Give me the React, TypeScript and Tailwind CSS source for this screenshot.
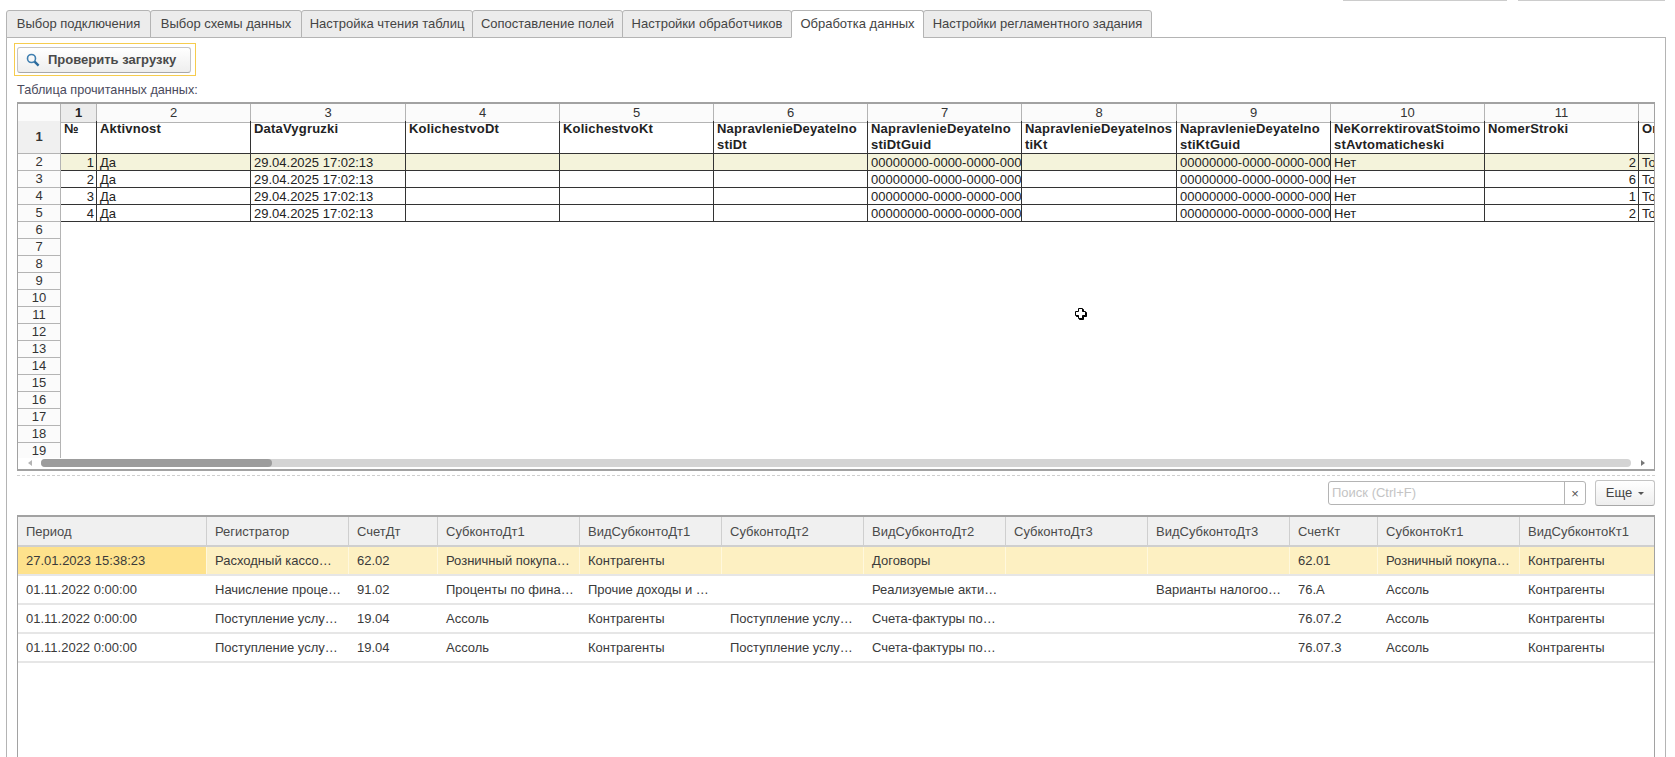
const tabs = [
  { label: "Выбор подключения", width: "w-[145px]" },
  { label: "Выбор схемы данных", width: "w-[152px]" },
  { label: "Настройка чтения таблиц", width: "w-[172px]" },
  { label: "Сопоставление полей", width: "w-[151px]" },
  { label: "Настройки обработчиков", width: "w-[170px]" },
  { label: "Обработка данных", width: "w-[133px]", active: true },
  { label: "Настройки регламентного задания", width: "w-[229px]" },
];

const SHEET_COLS =
  "grid h-[17px] w-max grid-cols-[43px_36px_154px_155px_154px_154px_154px_154px_155px_154px_154px_154px_154px]";

const sheetHeaders = [
  "№",
  "Aktivnost",
  "DataVygruzki",
  "KolichestvoDt",
  "KolichestvoKt",
  "NapravlenieDeyatelno stiDt",
  "NapravlenieDeyatelno stiDtGuid",
  "NapravlenieDeyatelnos tiKt",
  "NapravlenieDeyatelno stiKtGuid",
  "NeKorrektirovatStoimo stAvtomaticheski",
  "NomerStroki",
  "Or",
];

const GUID = "00000000-0000-0000-0000";

const sheetRows = [
  { no: 1, line: 2, selected: true },
  { no: 2, line: 6 },
  { no: 3, line: 1 },
  { no: 4, line: 2 },
];

const emptyRows = [6, 7, 8, 9, 10, 11, 12, 13, 14, 15, 16, 17, 18, 19];

const REG_COLS = "grid grid-cols-[189px_142px_89px_142px_142px_142px_142px_142px_142px_88px_142px_1fr]";

const regHeaders = [
  "Период",
  "Регистратор",
  "СчетДт",
  "СубконтоДт1",
  "ВидСубконтоДт1",
  "СубконтоДт2",
  "ВидСубконтоДт2",
  "СубконтоДт3",
  "ВидСубконтоДт3",
  "СчетКт",
  "СубконтоКт1",
  "ВидСубконтоКт1",
];

const regRows = [
  ["27.01.2023 15:38:23", "Расходный кассо…", "62.02", "Розничный покупа…", "Контрагенты", "", "Договоры", "", "", "62.01", "Розничный покупа…", "Контрагенты"],
  ["01.11.2022 0:00:00", "Начисление проце…", "91.02", "Проценты по фина…", "Прочие доходы и …", "", "Реализуемые акти…", "", "Варианты налогоо…", "76.А", "Ассоль", "Контрагенты"],
  ["01.11.2022 0:00:00", "Поступление услу…", "19.04", "Ассоль", "Контрагенты", "Поступление услу…", "Счета-фактуры по…", "", "", "76.07.2", "Ассоль", "Контрагенты"],
  ["01.11.2022 0:00:00", "Поступление услу…", "19.04", "Ассоль", "Контрагенты", "Поступление услу…", "Счета-фактуры по…", "", "", "76.07.3", "Ассоль", "Контрагенты"],
];

function RowHeader({ children }: { children: React.ReactNode }) {
  return (
    <div className="flex items-center justify-center overflow-hidden border-r border-b border-[#b4b4b4] bg-[#fbfbfb] text-[#333]">
      {children}
    </div>
  );
}

function Sheet() {
  return (
    <div className="flex h-[369px] flex-col border-x border-t-2 border-b-2 border-[#a2a2a2] bg-white">
      <div className="h-[354px] overflow-hidden text-[13px] leading-[18px] text-[#222]">
        {/* column numbers */}
        <div className={SHEET_COLS}>
          <div className="border-r border-b border-[#b4b4b4] bg-[#fbfbfb]" />
          {sheetHeaders.map((_, i) => (
            <div
              key={i}
              className={
                i === 0
                  ? "border-r border-b border-[#b4b4b4] bg-[#ececec] text-center font-bold"
                  : "border-r border-b border-[#b4b4b4] bg-[#fbfbfb] text-center text-[#333]"
              }
            >
              {i + 1}
            </div>
          ))}
        </div>
        {/* header row */}
        <div className={SHEET_COLS + " h-[33px] leading-[16px]"}>
          <div className="flex items-center justify-center border-r border-b border-[#b4b4b4] bg-[#f0f0f0] font-bold text-[#333]">
            1
          </div>
          {sheetHeaders.map((h) => (
            <div key={h} className="overflow-hidden border-r border-b border-[#333] pl-[3px] font-bold tracking-[0.2px]">
              {h.split(" ").map((part) => (
                <div key={part} className="whitespace-nowrap">
                  {part}
                </div>
              ))}
            </div>
          ))}
        </div>
        {/* data rows */}
        {sheetRows.map((row, i) => {
          const cell =
            "overflow-hidden whitespace-nowrap border-r border-b border-[#333] pl-[3px] " +
            (row.selected ? "bg-[#f4f3db]" : "bg-white");
          return (
            <div key={row.no} className={SHEET_COLS}>
              <RowHeader>{i + 2}</RowHeader>
              <div className={cell + " pr-[2px] text-right"}>{row.no}</div>
              <div className={cell}>Да</div>
              <div className={cell}>29.04.2025 17:02:13</div>
              <div className={cell} />
              <div className={cell} />
              <div className={cell} />
              <div className={cell}>{GUID}</div>
              <div className={cell} />
              <div className={cell}>{GUID}</div>
              <div className={cell}>Нет</div>
              <div className={cell + " pr-[2px] text-right"}>{row.line}</div>
              <div className={cell}>To</div>
            </div>
          );
        })}
        {emptyRows.map((n) => (
          <div key={n} className={SHEET_COLS}>
            <RowHeader>{n}</RowHeader>
          </div>
        ))}
      </div>
      {/* horizontal scrollbar */}
      <div className="mt-[1px] flex h-[8px] items-center">
        <div className="flex w-[23px] justify-end pr-[9px]">
          <div className="h-0 w-0 border-y-[3px] border-r-[4px] border-y-transparent border-r-[#b4b4b4]" />
        </div>
        <div className="flex h-[8px] w-[1590px] rounded-full bg-[#d4d4d4]">
          <div className="h-[8px] w-[231px] rounded-full bg-[#9c9c9c]" />
        </div>
        <div className="flex flex-1 justify-center">
          <div className="h-0 w-0 border-y-[3px] border-l-[4px] border-y-transparent border-l-[#777]" />
        </div>
      </div>
    </div>
  );
}

function SearchBar() {
  return (
    <div className="mt-[4px] flex h-[26px] items-center justify-end gap-[9px]">
      <div className="flex h-[24px] w-[258px] rounded-[3px] border border-[#b4b4b4] bg-white">
        <div className="flex-1 pl-[3px] text-[13px] leading-[22px] text-[#c4c4c4]">Поиск (Ctrl+F)</div>
        <div className="flex w-[21px] items-center justify-center border-l border-[#b4b4b4] text-[13px] leading-none text-[#555]">
          ×
        </div>
      </div>
      <div className="flex h-[26px] w-[60px] items-center justify-center gap-[6px] rounded-[3px] border border-[#c4c4c4] border-b-[#a8a8a8] bg-gradient-to-b from-white to-[#eeeeee] text-[13px] text-[#444]">
        Еще
        <div className="h-0 w-0 border-x-[3px] border-t-[3px] border-x-transparent border-t-[#555]" />
      </div>
    </div>
  );
}

function RegisterTable() {
  return (
    <div className="mt-[9px] flex-1 overflow-hidden border-x border-t-2 border-[#a2a2a2] bg-white text-[13px]">
      <div className={REG_COLS + " h-[30px] border-b-2 border-[#cfcfcf] bg-[#f0f0f0] text-[#4a4a4a]"}>
        {regHeaders.map((h) => (
          <div key={h} className="border-r border-[#cfcfcf] pl-[8px] leading-[29px] last:border-r-0">
            {h}
          </div>
        ))}
      </div>
      {regRows.map((row, i) => (
        <div key={i} className={REG_COLS + " h-[29px] border-b-2 border-[#e6e6e6] text-[#3a3a3a]"}>
          {row.map((value, j) => (
            <div
              key={j}
              className={
                "overflow-hidden whitespace-nowrap pl-[8px] leading-[28px] " +
                (i === 0
                  ? "border-r border-[#fff8dd] last:border-r-0 " + (j === 0 ? "bg-[#fee28c]" : "bg-[#fdf0c2]")
                  : "")
              }
            >
              {value}
            </div>
          ))}
        </div>
      ))}
    </div>
  );
}

export default function App() {
  return (
    <div className="relative flex h-[757px] w-[1675px] flex-col overflow-hidden bg-white [font-family:'Liberation_Sans',Arial,sans-serif]">
      {/* edges of the cut off buttons above */}
      <div className="flex h-[10px] justify-end gap-[11px] pr-[10px]">
        <div className="h-px w-[164px] bg-[#cccccc]" />
        <div className="h-px w-[147px] bg-[#cccccc]" />
      </div>

      {/* tabs */}
      <div className="z-10 ml-[6px] flex h-[28px]">
        {tabs.map((tab) => (
          <div
            key={tab.label}
            className={
              tab.width +
              " -mr-px flex items-center justify-center rounded-t-[3px] border border-[#b4b4b4] text-[13px] text-[#444] " +
              (tab.active ? "border-b-white bg-white" : "bg-[#ececec]")
            }
          >
            {tab.label}
          </div>
        ))}
      </div>

      <div className="-mt-px ml-[6px] flex w-[1660px] flex-1 flex-col border-x border-t border-[#b4b4b4] px-[10px]">
        <div className="mt-[5px] -ml-[3px] flex h-[33px] w-[182px] items-center justify-start border border-[#f6cc4e] pl-[2px]">
          <div className="flex h-[26px] w-[174px] items-center gap-[8px] rounded-[3px] border border-[#c4c4c4] border-b-[#a8a8a8] bg-gradient-to-b from-white to-[#eeeeee] pl-[8px] text-[13px] font-bold text-[#4a4a4a]">
            <svg width="14" height="14" viewBox="0 0 14 14" fill="none" className="shrink-0">
              <circle cx="5.5" cy="5.5" r="4" stroke="#3f7fb0" strokeWidth="1.6" />
              <path d="M8.6 8.6 L12.6 12.6" stroke="#2b6a9c" strokeWidth="2.4" />
            </svg>
            Проверить загрузку
          </div>
        </div>

        <div className="mt-[5px] mb-[2px] h-[19px] text-[12.7px] leading-[19px] text-[#4a4a5c]">Таблица прочитанных данных:</div>

        <Sheet />

        <div className="mt-[4px] border-t border-dashed border-[#cfcfcf]" />

        <SearchBar />
        <RegisterTable />
      </div>

      {/* mouse pointer over the sheet */}
      <svg width="17" height="17" viewBox="0 0 17 17" className="absolute top-[306px] left-[1072px]">
        <path d="M6.5 2.5h4v3h3v4h-3v3h-4v-3h-3v-4h3z" transform="translate(1 1)" fill="#000" stroke="#000" strokeLinejoin="round" />
        <path d="M6.5 2.5h4v3h3v4h-3v3h-4v-3h-3v-4h3z" fill="#fff" stroke="#000" strokeLinejoin="round" />
      </svg>
    </div>
  );
}
